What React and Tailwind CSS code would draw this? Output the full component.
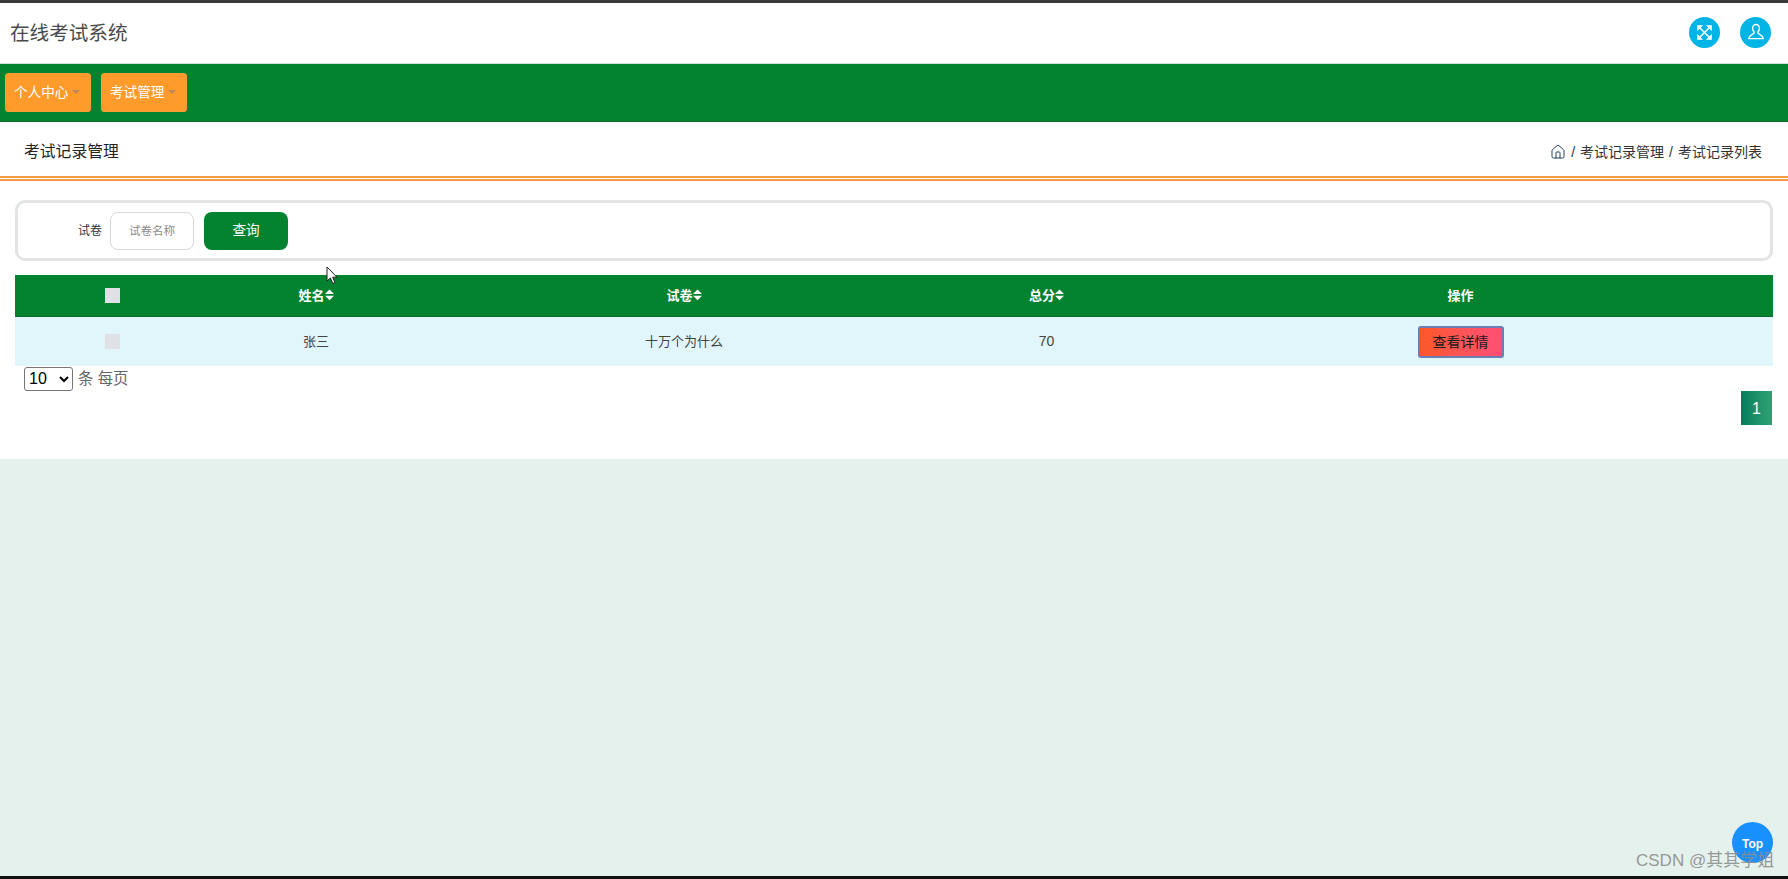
import React from "react";
import { House } from "lucide-react";

const FONT = "font-['Liberation_Sans','Noto_Sans_CJK_SC',sans-serif]";

const NavButton = ({ label }) => (
    <div className="w-[86px] h-[39px] flex items-center pl-[8px] pt-[2px] rounded-[3px] bg-[#ff9b2b] border border-[#f5a035] text-white text-[13.6px]">
        {label}
        <span className="ml-[4px] mb-[3px] w-0 h-0 border-x-[4px] border-x-transparent border-t-[4px] border-t-[#b98a58]"></span>
    </div>
);

const SortIcon = () => (
    <svg width="9" height="12" viewBox="0 0 9 12" className="fill-white">
        <path d="M4.5 0.5 L9 5 H0 Z" />
        <path d="M0 6.7 H9 L4.5 11.2 Z" />
    </svg>
);

const HeadCell = ({ label, sort }) => (
    <th className="p-0 font-bold text-[13px] text-white">
        <span className="inline-flex items-center justify-center">
            {label}
            {sort && <SortIcon />}
        </span>
    </th>
);

const App = () => {
    return (
        <div className={`relative w-full h-[879px] overflow-hidden flex flex-col bg-[#e5f1ec] ${FONT}`}>
            <div className="h-[3px] bg-[#3a3a3a]"></div>

            <div className="h-[60px] bg-white flex items-center justify-between pl-[10px] pr-[17px]">
                <div className="text-[19.6px] text-[#4a4a4a] mt-[2px]">在线考试系统</div>
                <div className="flex items-center gap-[20px] mb-[2px]">
                    <div className="w-[31px] h-[31px] rounded-full bg-[#00b4e6] flex items-center justify-center">
                        <svg width="17" height="17" viewBox="0 0 17 17" fill="#ffffff" stroke="#ffffff">
                            <path d="M4 4 L13 13 M13 4 L4 13" strokeWidth="1.6" fill="none" />
                            <path d="M1.5 1.5 H6.5 L1.5 6.5 Z" strokeWidth="0.6" />
                            <path d="M15.5 1.5 H10.5 L15.5 6.5 Z" strokeWidth="0.6" />
                            <path d="M1.5 15.5 H6.5 L1.5 10.5 Z" strokeWidth="0.6" />
                            <path d="M15.5 15.5 H10.5 L15.5 10.5 Z" strokeWidth="0.6" />
                        </svg>
                    </div>
                    <div className="w-[31px] h-[31px] rounded-full bg-[#00b4e6] flex items-center justify-center">
                        <svg width="18" height="18" viewBox="0 0 18 18" fill="none" stroke="#ffffff" strokeWidth="1.4">
                            <path d="M9 1.5 C6.8 1.5 5.6 3.2 5.6 5.2 C5.6 7 6.4 8.3 7.2 9 C7.4 10.2 6.6 10.9 5 11.7 C3.4 12.5 2 13.3 1.8 15.6 H16.2 C16 13.3 14.6 12.5 13 11.7 C11.4 10.9 10.6 10.2 10.8 9 C11.6 8.3 12.4 7 12.4 5.2 C12.4 3.2 11.2 1.5 9 1.5 Z" />
                        </svg>
                    </div>
                </div>
            </div>

            <div className="h-[59px] bg-[#038230] border-t border-t-[#cfe3d6] border-b border-b-[#0a6b2c] flex items-center pl-[5px] gap-[10px]">
                <NavButton label="个人中心" />
                <NavButton label="考试管理" />
            </div>

            <div className="h-[54px] bg-white flex items-center justify-between pt-[6px] pl-[24px] pr-[26px]">
                <div className="text-[15.8px] text-[#222222]">考试记录管理</div>
                <div className="flex items-center text-[14px] text-[#333333] gap-[5px]">
                    <House size={16} color="#24425c" strokeWidth={1.5} />
                    <span>/</span>
                    <span>考试记录管理</span>
                    <span>/</span>
                    <span>考试记录列表</span>
                </div>
            </div>

            <div className="h-[5px] bg-white border-y-2 border-y-[#f39a45]"></div>

            <div className="h-[278px] bg-white pt-[19px] pl-[15px] pr-[15px] flex flex-col">
                <div className="h-[61px] border-[3px] border-[#e2e4e6] rounded-[10px] flex items-center pl-[60px]">
                    <label className="w-[32px] pt-[1px] text-[12px] text-[#333333]">试卷</label>
                    <div className="w-[84px] h-[38px] mr-[10px] pt-[2px] flex items-center justify-center border border-[#d8d8d8] rounded-[8px] text-[11.5px] text-[#8a8a8a]">
                        试卷名称
                    </div>
                    <div className="w-[84px] h-[38px] pt-[2px] flex items-center justify-center bg-[#038230] rounded-[8px] text-[13.6px] text-white">
                        查询
                    </div>
                </div>

                <table className="mt-[14px] w-[1758px] table-fixed border-collapse">
                    <colgroup>
                        <col className="w-[194px]" />
                        <col className="w-[214px]" />
                        <col className="w-[522px]" />
                        <col className="w-[203px]" />
                        <col className="w-[625px]" />
                    </colgroup>
                    <thead>
                        <tr className="h-[41px] bg-[#038230] border-b border-b-[#0a6b2c]">
                            <th className="p-0">
                                <div className="w-[15px] h-[15px] mx-auto bg-[#dfe1e6]"></div>
                            </th>
                            <HeadCell label="姓名" sort />
                            <HeadCell label="试卷" sort />
                            <HeadCell label="总分" sort />
                            <HeadCell label="操作" />
                        </tr>
                    </thead>
                    <tbody>
                        <tr className="h-[50px] bg-[#e1f6fa] text-[13px] text-[#444444] text-center">
                            <td className="p-0">
                                <div className="w-[15px] h-[15px] mx-auto bg-[#dfe1e6]"></div>
                            </td>
                            <td className="p-0">张三</td>
                            <td className="p-0">十万个为什么</td>
                            <td className="p-0 text-[14px]">70</td>
                            <td className="p-0 pt-[2px]">
                                <div className="w-[86px] h-[32px] mx-auto flex items-center justify-center rounded-[3px] border-2 border-[#6c7fb5] bg-gradient-to-r from-[#ff5722] to-[#ff4f78] text-[14px] text-[#1a1a1a]">
                                    查看详情
                                </div>
                            </td>
                        </tr>
                    </tbody>
                </table>

                <div className="h-[25px] pl-[9px] flex items-center gap-[5px] text-[15.4px] text-[#666666]">
                    <select defaultValue="10" className="w-[49px] h-[24px] border border-[#767676] rounded-[3px] bg-white text-[16px] text-black">
                        <option value="10">10</option>
                    </select>
                    <span>条 每页</span>
                </div>

                <div className="flex justify-end pr-[1px]">
                    <div className="w-[31px] h-[34px] pt-[1px] flex items-center justify-center bg-gradient-to-r from-[#007d5c] to-[#2fa374] text-[16px] text-white">
                        1
                    </div>
                </div>
            </div>

            <div className="flex-1"></div>
            <div className="h-[3px] bg-[#111111]"></div>

            {/* cursor from the screen capture */}
            <svg width="13" height="19" viewBox="0 0 13 19" className="absolute left-[326px] top-[266px]">
                <path d="M1 1 V15 L4.4 12 L6.8 17.5 L9 16.5 L6.7 11.2 H11 Z" fill="#ffffff" stroke="#222222" strokeWidth="1" />
            </svg>

            <div className="absolute left-[1732px] top-[822px] w-[41px] h-[41px] pt-[2px] rounded-full bg-[#1890ff] flex items-center justify-center text-[12px] font-semibold text-white">
                Top
            </div>
            <div className="absolute left-[1636px] top-[850px] text-[17px] leading-[22px] text-[#8c8c8c]/90">
                CSDN @其其学姐
            </div>
        </div>
    );
};

export default App;
